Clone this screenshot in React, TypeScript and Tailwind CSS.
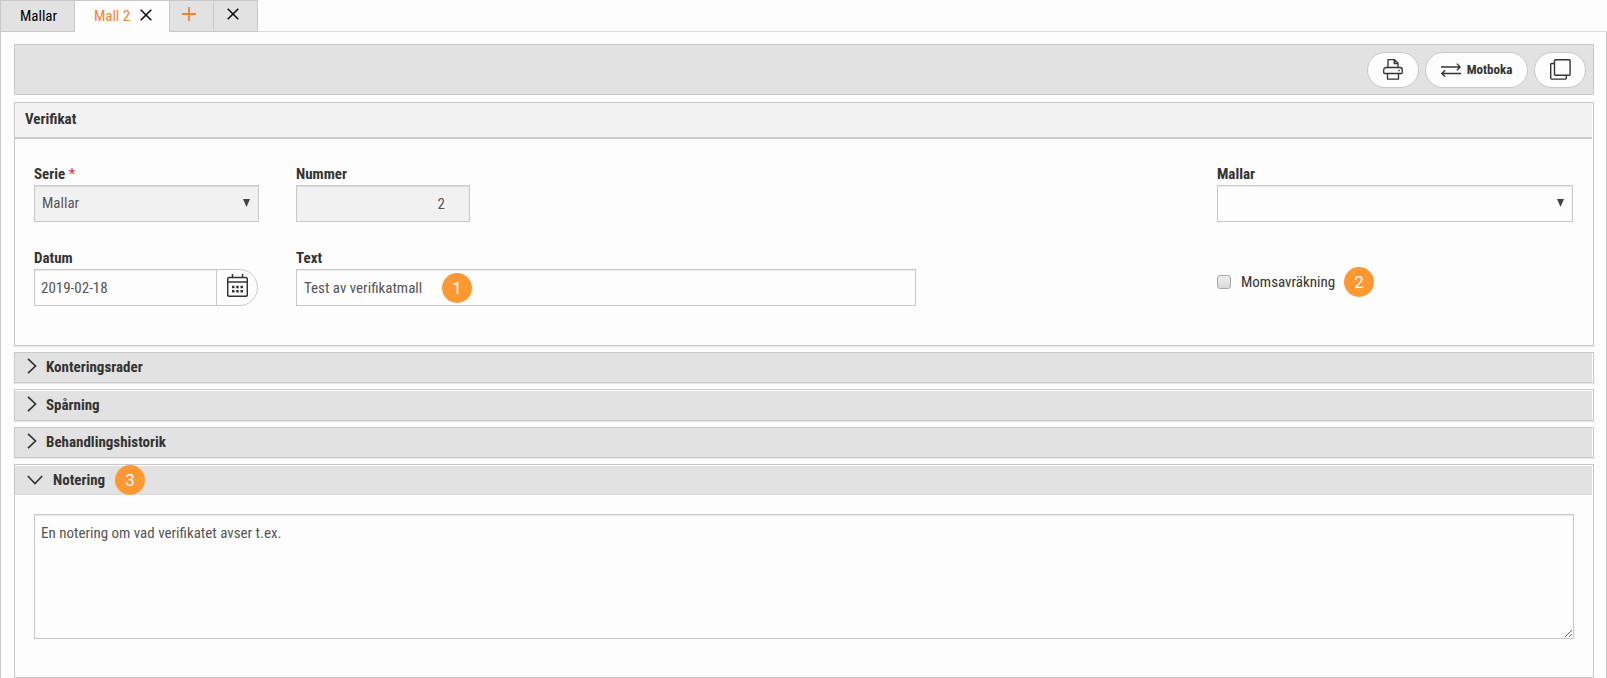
import type { ReactNode } from "react";

const fieldBase =
  "border border-[#c8c8c8] text-[#555] shadow-[inset_0_1px_1px_rgba(0,0,0,0.08)] outline-none";
const field = `${fieldBase} bg-[#fdfdfd]`;
const lockedField = `${fieldBase} bg-[#f2f1f2]`;
const label = "block pb-px text-[15px] font-bold leading-5 text-[#333]";
const pill =
  "flex h-9 items-center justify-center rounded-full border border-[#c8c8c8] bg-[#fdfdfd] text-[#333]";

function CrossIcon() {
  return (
    <svg width="12" height="12" viewBox="0 0 12 12" fill="none" stroke="#111" strokeWidth="1.6" aria-hidden="true">
      <path d="M.7.7l10.6 10.6M11.3.7L.7 11.3" />
    </svg>
  );
}

function PlusIcon() {
  return (
    <svg width="14" height="14" viewBox="0 0 14 14" fill="none" stroke="#f58232" strokeWidth="1.8" aria-hidden="true">
      <path d="M7 0v14M0 7h14" />
    </svg>
  );
}

function PrinterIcon() {
  return (
    <svg width="20" height="21" viewBox="0 0 20 21" fill="none" stroke="#333" strokeWidth="1.3" strokeLinejoin="round" aria-hidden="true">
      <path d="M5 8.500V.7h6.500l3.500 3.500v4.300M11.200.7v3.800H15" />
      <path d="M4 14.500H1.700a1 1 0 0 1-1-1v-2.500a2.500 2.500 0 0 1 2.500-2.500h13.600a2.500 2.500 0 0 1 2.500 2.500v2.500a1 1 0 0 1-1 1H16" />
      <path d="M4 14.500h12M4.500 14.500v5.700h11v-5.700" />
      <path d="M15.300 11.500h1.400" />
    </svg>
  );
}

function SwapIcon() {
  return (
    <svg width="20" height="14" viewBox="0 0 20 14" fill="none" stroke="#333" strokeWidth="1.3" aria-hidden="true">
      <path d="M0 4h19M15.8.6L19.2 4l-3.4 3.2M20 10.5H1M4.200 7.200L.8 10.5l3.400 3.200" />
    </svg>
  );
}

function CopyIcon() {
  return (
    <svg width="21" height="21" viewBox="0 0 21 21" fill="none" stroke="#333" strokeWidth="1.4" aria-hidden="true">
      <rect x="4.500" y=".7" width="15.600" height="15.600" rx="1" />
      <path d="M4.500 4.500H1.700a1 1 0 0 0-1 1v13.600a1 1 0 0 0 1 1h13.600a1 1 0 0 0 1-1v-2.800" />
    </svg>
  );
}

function CalendarIcon() {
  return (
    <svg width="21" height="23" viewBox="0 0 21 23" fill="none" stroke="#333" strokeWidth="1.5" aria-hidden="true">
      <rect x=".7" y="3.5" width="19.6" height="18.8" rx="1.5" />
      <path d="M.7 8h19.600M5.5 0v3.5M15.5 0v3.5" />
      <path d="M5 13h2.500M9.200 13h2.500M13.500 13H16M5 17.300h2.500M9.200 17.300h2.500M13.500 17.300H16" strokeWidth="2.6" />
    </svg>
  );
}

function ChevronRight() {
  return (
    <svg width="10" height="16" viewBox="0 0 10 16" fill="none" stroke="#333" strokeWidth="1.7" aria-hidden="true">
      <path d="M1 .8L8.5 8 1 15.2" />
    </svg>
  );
}

function ChevronDown() {
  return (
    <svg width="16" height="10" viewBox="0 0 16 10" fill="none" stroke="#333" strokeWidth="1.7" aria-hidden="true">
      <path d="M.8 1L8 8.500 15.200 1" />
    </svg>
  );
}

function SelectArrow() {
  return (
    <svg className="pointer-events-none absolute top-[14px] right-[9px]" width="7" height="8" viewBox="0 0 7 8" fill="#444" aria-hidden="true">
      <path d="M0 0h7L3.500 8z" />
    </svg>
  );
}

function Badge({ children }: { children: ReactNode }) {
  return (
    <span className="flex size-[30px] items-center justify-center rounded-full bg-[#ff9832] font-[Roboto,sans-serif] text-[17px] leading-none text-white">
      {children}
    </span>
  );
}

function Collapsed({ title, inset = false }: { title: string; inset?: boolean }) {
  return (
    <section className={`border border-[#c8c8c8] pr-px shadow-[0_1px_1px_rgba(0,0,0,0.08)] ${inset ? "pt-px" : ""}`}>
      <h2>
        <button type="button" aria-expanded="false" className="flex h-[29px] w-full items-center gap-[9px] bg-[#e2e2e2] pl-3 text-[15px] font-bold text-[#333]">
          <span className="pb-1">
            <ChevronRight />
          </span>
          {title}
        </button>
      </h2>
    </section>
  );
}

export default function App() {
  return (
    <div className="flex min-h-screen flex-col bg-[#fdfdfd] font-['Roboto_Condensed','Liberation_Sans_Narrow','Arial_Narrow',sans-serif] text-[15px] text-[#333]">
      <nav className="flex h-8 items-stretch">
        <div className="flex border-t border-l border-[#c8c8c8]">
          <button type="button" className="w-[74px] border-r border-b border-[#c8c8c8] bg-[#e2e2e2] pl-0.5 text-black">
            Mallar
          </button>
          <div className="flex w-[95px] items-center justify-center gap-2.5 border-r border-[#c8c8c8] pl-0.5">
            <button type="button" className="text-[#f58232]">Mall 2</button>
            <button type="button" aria-label="Stäng Mall 2" className="pb-1">
              <CrossIcon />
            </button>
          </div>
          <button type="button" aria-label="Ny flik" className="flex w-11 items-center justify-center border-r border-b border-[#c8c8c8] bg-[#e2e2e2] pr-1.5 pb-1">
            <PlusIcon />
          </button>
          <button type="button" aria-label="Stäng alla" className="flex w-11 items-center justify-center border-r border-b border-[#c8c8c8] bg-[#e2e2e2] pr-1.5 pb-1">
            <CrossIcon />
          </button>
        </div>
        <div className="flex-1 border-b border-[#dcdcdc]" />
      </nav>

      <main className="flex flex-1 flex-col gap-1.5 border-x border-[#c8c8c8] pt-3 pr-3 pl-[13px]">
        <div className="mb-px flex h-[51px] items-center justify-end gap-1.5 border border-[#c8c8c8] bg-[#e2e2e2] pr-[7px]">
          <button type="button" aria-label="Skriv ut" className={`${pill} w-[52px]`}>
            <PrinterIcon />
          </button>
          <button type="button" className={`${pill} w-[103px] gap-1.5 text-[13px] font-bold`}>
            <SwapIcon />
            Motboka
          </button>
          <button type="button" aria-label="Kopiera" className={`${pill} w-[52px]`}>
            <CopyIcon />
          </button>
        </div>

        <section className="h-[244px] border border-[#c8c8c8] shadow-[0_1px_1px_rgba(0,0,0,0.08)]">
          <h2 className="mr-px flex h-9 items-center border-b-2 border-[#cccccc] bg-[#f3f2f3] pb-0.5 pl-2.5 font-bold">Verifikat</h2>
          <div className="flex justify-between gap-8 pt-[25px] pr-5 pl-[19px]">
            <div className="flex gap-[37px]">
              <div className="flex w-[225px] flex-col gap-[26px]">
                <div>
                  <label htmlFor="serie" className={label}>
                    Serie <span className="font-normal text-[#b8443c]">*</span>
                  </label>
                  <div className="relative">
                    <select id="serie" className={`${lockedField} block h-[37px] w-full appearance-none pl-[7px]`}>
                      <option>Mallar</option>
                    </select>
                    <SelectArrow />
                  </div>
                </div>
                <div>
                  <label htmlFor="datum" className={label}>Datum</label>
                  <div className="flex">
                    <input id="datum" defaultValue="2019-02-18" className={`${field} h-[37px] w-[183px] pl-1.5`} />
                    <button type="button" aria-label="Välj datum" className="-ml-px flex h-[37px] w-[42px] items-center justify-center rounded-r-full border border-[#c8c8c8] pb-1">
                      <CalendarIcon />
                    </button>
                  </div>
                </div>
              </div>
              <div className="flex flex-col gap-[26px]">
                <div>
                  <label htmlFor="nummer" className={label}>Nummer</label>
                  <input id="nummer" readOnly defaultValue="2" className={`${lockedField} block h-[37px] w-[174px] pr-6 text-right`} />
                </div>
                <div>
                  <label htmlFor="text" className={label}>Text</label>
                  <div className="relative">
                    <input id="text" defaultValue="Test av verifikatmall" className={`${field} block h-[37px] w-[620px] pl-[7px]`} />
                    <div className="absolute top-1 left-[146px]">
                      <Badge>1</Badge>
                    </div>
                  </div>
                </div>
              </div>
            </div>
            <div className="flex w-[356px] flex-col gap-[45px]">
              <div>
                <label htmlFor="mallar" className={label}>Mallar</label>
                <div className="relative">
                  <select id="mallar" className={`${field} block h-[37px] w-full appearance-none pl-[7px]`}>
                    <option></option>
                  </select>
                  <SelectArrow />
                </div>
              </div>
              <div className="flex items-center gap-[9px]">
                <label className="flex items-center gap-2.5">
                  <input type="checkbox" className="size-3.5 appearance-none rounded-[3px] border border-[#aaa] bg-linear-to-b from-[#eee] to-[#d8d8d8]" />
                  Momsavräkning
                </label>
                <Badge>2</Badge>
              </div>
            </div>
          </div>
        </section>

        <Collapsed title="Konteringsrader" />
        <Collapsed title="Spårning" inset />
        <Collapsed title="Behandlingshistorik" />

        <section className="flex-1 border border-[#c8c8c8]">
          <h2 className="mt-px mr-px flex h-[29px] items-center gap-2.5 border-b border-[#d8d8d8] bg-[#e2e2e2] pl-3">
            <button type="button" aria-expanded="true" className="flex items-center gap-2.5 font-bold">
              <ChevronDown />
              Notering
            </button>
            <Badge>3</Badge>
          </h2>
          <div className="px-[19px] pt-[19px]">
            <textarea
              aria-label="Notering"
              defaultValue="En notering om vad verifikatet avser t.ex."
              className={`${field} block h-[125px] w-full resize px-1.5 py-2 leading-5`}
            />
          </div>
        </section>
      </main>
    </div>
  );
}
